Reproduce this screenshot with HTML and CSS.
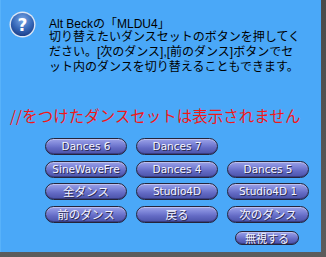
FILE: index.html
```html
<!DOCTYPE html>
<html>
<head>
<meta charset="utf-8">
<link rel="stylesheet" href="styles.css">
</head>
<body>
<div class="window">
  <div class="dialog">
    <div class="header">
      <svg class="icon" width="27" height="27" viewBox="0 0 27 27">
        <defs>
          <radialGradient id="g" cx="50%" cy="30%" r="70%">
            <stop offset="0" stop-color="#7aa8e8"/>
            <stop offset="0.6" stop-color="#3668b8"/>
            <stop offset="1" stop-color="#1c3f8a"/>
          </radialGradient>
        </defs>
        <circle cx="13.5" cy="13.5" r="13" fill="#dce6f4"/>
        <circle cx="13.5" cy="13.5" r="11.6" fill="url(#g)"/>
        <text x="13.5" y="19.5" text-anchor="middle" class="q">?</text>
      </svg>
      <div class="msg">
        <div class="title">Alt Beckの「MLDU4」</div>
        <div class="body">切り替えたいダンスセットのボタンを押してく<br>ださい。[次のダンス],[前のダンス]ボタンでセ<br>ット内のダンスを切り替えることもできます。</div>
      </div>
    </div>
    <div class="warn">//をつけたダンスセットは表示されません</div>
    <div class="buttons">
      <div class="btn">Dances 6</div>
      <div class="btn">Dances 7</div>
      <div class="empty"></div>
      <div class="btn">SineWaveFre</div>
      <div class="btn">Dances 4</div>
      <div class="btn">Dances 5</div>
      <div class="btn jp">全ダンス</div>
      <div class="btn">Studio4D</div>
      <div class="btn">Studio4D 1</div>
      <div class="btn jp">前のダンス</div>
      <div class="btn jp">戻る</div>
      <div class="btn jp">次のダンス</div>
    </div>
    <div class="ignore-row">
      <div class="btn small jp">無視する</div>
    </div>
  </div>
</div>
</body>
</html>
```
FILE: styles.css
```css
html, body {
  margin: 0;
  padding: 0;
}
body {
  width: 326px;
  height: 257px;
  overflow: hidden;
  font-family: "Liberation Sans", "Noto Sans CJK JP", sans-serif;
}
.window {
  width: 326px;
  height: 257px;
  background: linear-gradient(to bottom, #4a4a4a, #5c5c5c);
}
.dialog {
  width: 321px;
  height: 252px;
  background: #4aa8f8;
  box-sizing: border-box;
  border-left: 1px solid #58b2fa;
  overflow: hidden;
}
.header {
  display: flex;
  align-items: flex-start;
  padding: 11px 0 0 8px;
}
.icon {
  flex: none;
  display: block;
}
.q {
  font-family: "DejaVu Sans", sans-serif;
  font-weight: bold;
  font-size: 17px;
  fill: #ffffff;
}
.msg {
  margin-left: 13px;
  margin-top: 7px;
  font-size: 12px;
  color: #000;
}
.title {
  line-height: 12px;
}
.body {
  line-height: 15px;
}
.warn {
  margin-top: 30px;
  margin-left: 9px;
  font-family: "Noto Sans CJK JP", sans-serif;
  font-size: 15.5px;
  line-height: 20px;
  color: #f01818;
  white-space: nowrap;
}
.buttons {
  display: grid;
  grid-template-columns: 82px 82px 82px;
  column-gap: 9px;
  row-gap: 5.5px;
  margin-top: 13px;
  margin-left: 44px;
}
.btn {
  height: 17px;
  box-sizing: border-box;
  border: 1px solid #24243a;
  border-radius: 9px;
  background: linear-gradient(to bottom, #9ca2e8 0%, #7a82d6 35%, #636ac4 60%, #4a52a8 100%);
  box-shadow: inset 0 1px 0 rgba(255,255,255,0.35), inset 0 -1px 0 rgba(20,20,60,0.35);
  color: #f4f4ff;
  text-shadow: 1px 1px 0 #2c2c50;
  font-family: "DejaVu Sans", "Noto Sans CJK JP", sans-serif;
  font-size: 10.5px;
  line-height: 15px;
  text-align: center;
  white-space: nowrap;
  overflow: hidden;
}
.btn.jp {
  font-family: "Noto Sans CJK JP", sans-serif;
  font-size: 11.5px;
}
.ignore-row {
  display: flex;
  justify-content: flex-end;
  margin-top: 8.5px;
  padding-right: 22px;
}
.btn.small {
  width: 64px;
  height: 14px;
  line-height: 12px;
  border-radius: 7px;
  font-size: 11px;
}
```
